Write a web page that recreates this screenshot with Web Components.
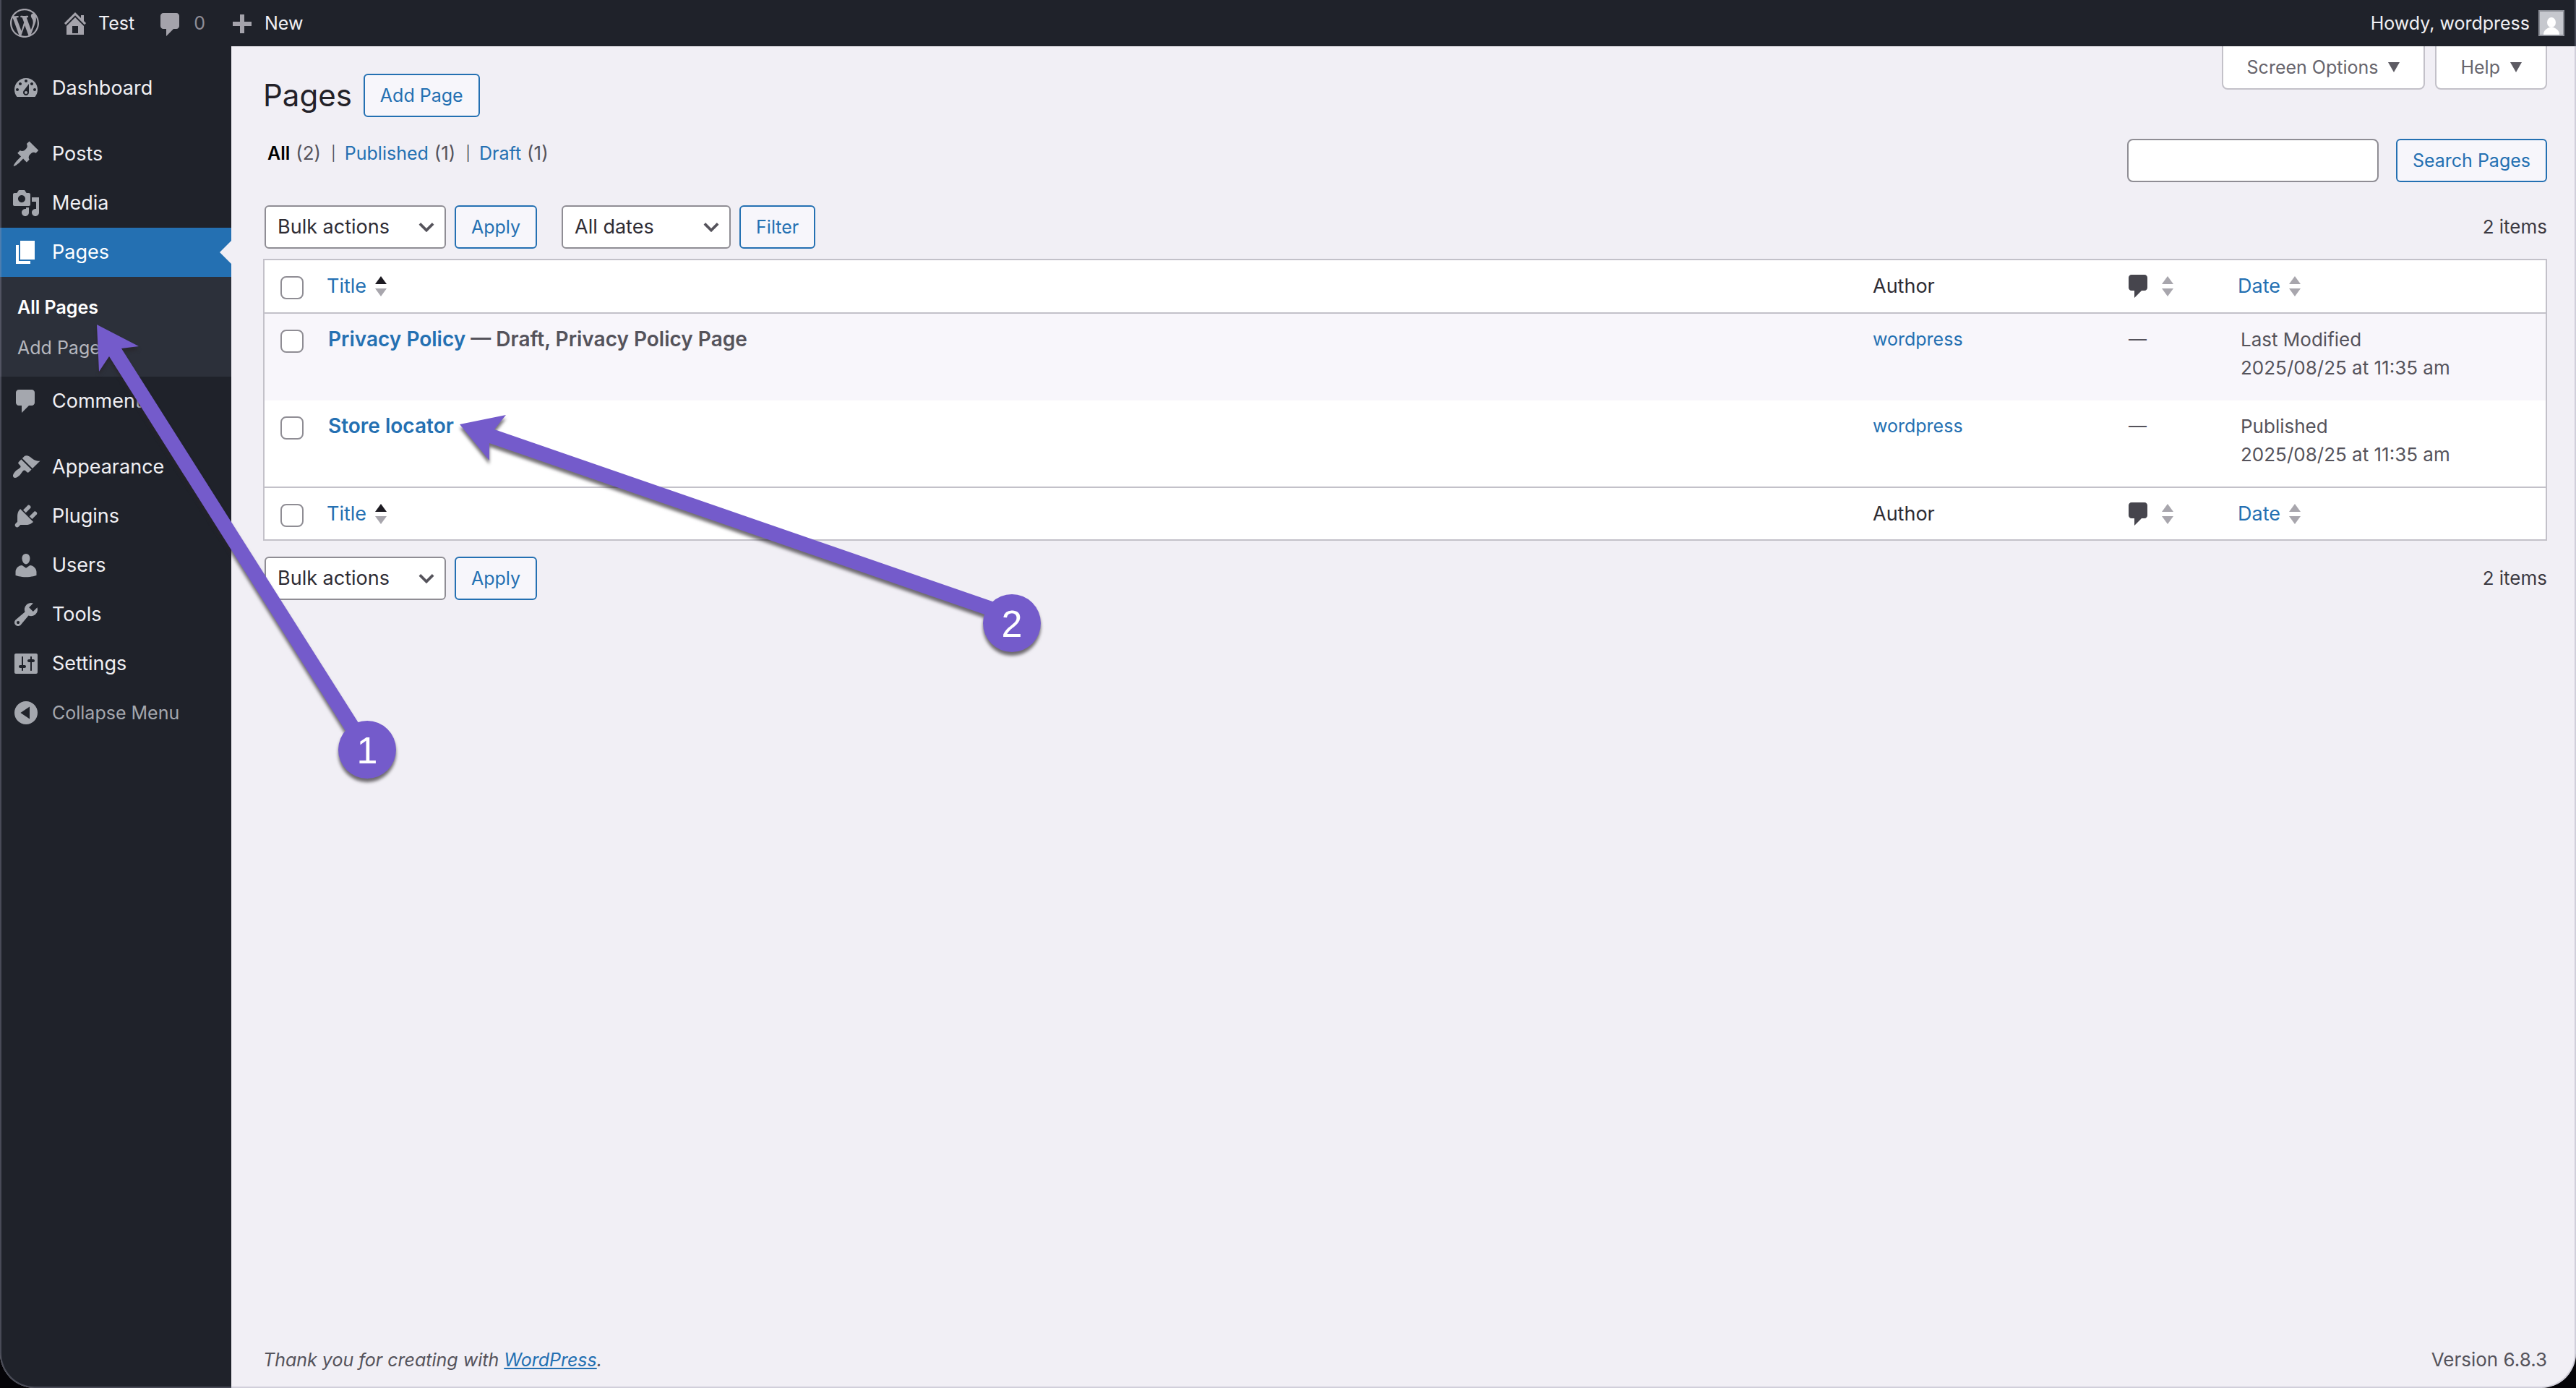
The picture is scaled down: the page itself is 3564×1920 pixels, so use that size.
<!DOCTYPE html>
<html lang="en">
<head>
<meta charset="utf-8">
<title>Pages ‹ Test — WordPress</title>
<style>
	html {
		background: #050408;
	}
	body {
		margin: 0;
		font-family: Inter, "Liberation Sans", sans-serif;
		font-size: 25px;
		line-height: 40px;
		color: #3c3a42;
		--accent: #2470b2;
		--bar: #1f222a;
		--sub: #2c303a;
		--page: #f1eff5;
		--line: #c3c1c9;
		--field: #8f8d94;
		--muted: #55535b;
		--mark: #745bcb;
	}
</style>
</head>
<body>
<wp-screen>
	<admin-bar slot="bar" site="Test" comments="0" user="wordpress"></admin-bar>
	<admin-menu slot="menu">
		<menu-item icon="dashboard">Dashboard</menu-item>
		<menu-item icon="post" gap>Posts</menu-item>
		<menu-item icon="media">Media</menu-item>
		<menu-item icon="page" current>Pages</menu-item>
		<sub-menu>
			<sub-item current>All Pages</sub-item>
			<sub-item>Add Page</sub-item>
		</sub-menu>
		<menu-item icon="comments">Comments</menu-item>
		<menu-item icon="appearance" gap>Appearance</menu-item>
		<menu-item icon="plugins">Plugins</menu-item>
		<menu-item icon="users">Users</menu-item>
		<menu-item icon="tools">Tools</menu-item>
		<menu-item icon="settings">Settings</menu-item>
		<menu-item icon="collapse" muted>Collapse Menu</menu-item>
	</admin-menu>
	<screen-header>Pages</screen-header>
	<view-filters></view-filters>
	<table-nav dates items="2 items"></table-nav>
	<pages-table></pages-table>
	<table-nav items="2 items"></table-nav>
	<screen-footer version="Version 6.8.3"></screen-footer>
	<step-arrows slot="overlay"></step-arrows>
</wp-screen>

<script>
const ICONS = {
	wordpress: "M20 10c0-5.51-4.49-10-10-10C4.48 0 0 4.49 0 10c0 5.52 4.48 10 10 10 5.51 0 10-4.48 10-10zM7.78 15.37L4.37 6.22c.55-.02 1.17-.08 1.17-.08.5-.06.44-1.13-.06-1.11 0 0-1.45.11-2.37.11-.18 0-.37 0-.58-.01C4.12 2.69 6.87 1.11 10 1.11c2.33 0 4.45.87 6.05 2.34-.68-.11-1.65.39-1.65 1.58 0 .74.45 1.36.9 2.1.35.61.55 1.36.55 2.46 0 1.49-1.4 5-1.4 5l-3.03-8.37c.54-.02.82-.17.82-.17.5-.05.44-1.25-.06-1.22 0 0-1.44.12-2.38.12-.87 0-2.33-.12-2.33-.12-.5-.03-.56 1.2-.06 1.22l.92.08 1.26 3.41zM17.41 10c.24-.64.74-1.87.43-4.25.7 1.29 1.05 2.71 1.05 4.25 0 3.29-1.73 6.24-4.4 7.78.97-2.59 1.94-5.2 2.92-7.78zM6.1 18.09C3.12 16.65 1.11 13.53 1.11 10c0-1.3.23-2.48.72-3.59C3.25 10.3 4.67 14.2 6.1 18.09zm4.03-6.63l2.58 6.98c-.86.29-1.76.45-2.71.45-.79 0-1.57-.11-2.29-.33.81-2.38 1.62-4.74 2.42-7.1z",
	home: "M16 8.5l1.53 1.53-1.06 1.06L10 4.6l-6.47 6.49-1.06-1.06L10 2.5l4 4v-2h2v4zm-6-2.46l6 5.99V18H4v-5.97zM12 17v-5H8v5h4z",
	plus: "M17 7v3h-5v5H9v-5H4V7h5V2h3v5h5z",
	comments: "M5 2h9c1.1 0 2 .9 2 2v7c0 1.1-.9 2-2 2h-2l-5 5v-5H5c-1.1 0-2-.9-2-2V4c0-1.1.9-2 2-2z",
	dashboard: "M3.76 16h12.48c1.1-1.37 1.76-3.11 1.76-5 0-4.42-3.58-8-8-8s-8 3.58-8 8c0 1.89.66 3.63 1.76 5zM10 4c.55 0 1 .45 1 1s-.45 1-1 1-1-.45-1-1 .45-1 1-1zM6 6c.55 0 1 .45 1 1s-.45 1-1 1-1-.45-1-1 .45-1 1-1zm8 0c.55 0 1 .45 1 1s-.45 1-1 1-1-.45-1-1 .45-1 1-1zm-5.37 5.55L12 7v6c0 1.1-.9 2-2 2s-2-.9-2-2c0-.57.24-1.08.63-1.45zM4 10c.55 0 1 .45 1 1s-.45 1-1 1-1-.45-1-1 .45-1 1-1zm12 0c.55 0 1 .45 1 1s-.45 1-1 1-1-.45-1-1 .45-1 1-1zm-5 3c0-.55-.45-1-1-1s-1 .45-1 1 .45 1 1 1 1-.45 1-1z",
	post: "M10.44 3.02l1.82-1.82 6.36 6.35-1.83 1.82c-1.05-.68-2.48-.57-3.41.36l-.75.75c-.92.93-1.04 2.35-.35 3.41l-1.83 1.82-2.41-2.41-2.8 2.79c-.42.42-3.38 2.71-3.8 2.29s1.86-3.39 2.28-3.81l2.79-2.79L4.1 9.36l1.83-1.82c1.05.69 2.48.57 3.4-.36l.75-.75c.93-.92 1.05-2.35.36-3.41z",
	media: "M13 11V4c0-.55-.45-1-1-1h-1.67L9 1H5L3.67 3H2c-.55 0-1 .45-1 1v7c0 .55.45 1 1 1h10c.55 0 1-.45 1-1zM7 4.5c1.38 0 2.5 1.12 2.5 2.5S8.38 9.5 7 9.5 4.5 8.38 4.5 7 5.62 4.5 7 4.5zM14 6h5v10.5c0 1.38-1.12 2.5-2.5 2.5S14 17.88 14 16.5s1.12-2.5 2.5-2.5c.17 0 .34.02.5.05V9h-3V6zm-4 8.05V13h2v3.5c0 1.38-1.12 2.5-2.5 2.5S7 17.88 7 16.5 8.12 14 9.5 14c.17 0 .34.02.5.05z",
	page: "M6 15V2h10v13H6zm-1 1h8v2H3V5h2v11z",
	appearance: "M14.48 11.06L7.41 3.99l1.5-1.5c.5-.56 2.3-.47 3.51.32 1.21.8 1.43 1.28 2.91 2.1 1.18.64 2.45 1.26 4.45.85zm-.71.71L6.7 4.7 4.93 6.47c-.39.39-.39 1.02 0 1.41l1.06 1.06c.39.39.39 1.03 0 1.42-.6.6-1.43 1.11-2.21 1.69-.35.26-.7.53-1.01.84C1.43 14.23.4 16.08 1.4 17.07c.99 1 2.84-.03 4.18-1.36.31-.31.58-.66.85-1.02.57-.78 1.08-1.61 1.69-2.21.39-.39 1.02-.39 1.41 0l1.06 1.06c.39.39 1.02.39 1.41 0z",
	plugins: "M13.11 4.36L9.87 7.6 8 5.73l3.24-3.24c.35-.34 1.05-.2 1.56.32.52.51.66 1.21.31 1.55zm-8 1.77l.91-1.12 9.01 9.01-1.19.84c-.71.71-2.63 1.16-3.82 1.16H6.14L4.9 17.26c-.59.59-1.54.59-2.12 0-.59-.58-.59-1.53 0-2.12l1.24-1.24v-3.88c0-1.13.4-3.19 1.09-3.89zm7.26 3.97l3.24-3.24c.34-.35 1.04-.21 1.55.31.52.51.66 1.21.31 1.55l-3.24 3.25z",
	users: "M10 9.25c-2.27 0-2.73-3.44-2.73-3.44C7 4.02 7.82 2 9.97 2c2.16 0 2.98 2.02 2.71 3.81 0 0-.41 3.44-2.68 3.44zm0 2.57L12.72 10c2.39 0 4.52 2.33 4.52 4.53v2.49s-3.65 1.13-7.24 1.13c-3.65 0-7.24-1.13-7.24-1.13v-2.49c0-2.25 1.94-4.48 4.47-4.48z",
	tools: "M16.68 9.77c-1.34 1.34-3.3 1.67-4.95.99l-5.41 6.52c-.99.99-2.59.99-3.58 0s-.99-2.59 0-3.57l6.52-5.42c-.68-1.65-.35-3.61.99-4.95 1.28-1.28 3.12-1.62 4.72-1.06l-2.89 2.89 2.82 2.82 2.86-2.87c.53 1.58.18 3.39-1.08 4.65zM3.81 16.21c.4.39 1.04.39 1.43 0 .4-.4.4-1.04 0-1.43-.39-.4-1.03-.4-1.43 0-.39.39-.39 1.03 0 1.43z",
	settings: "M18 16V4c0-.55-.45-1-1-1H3c-.55 0-1 .45-1 1v12c0 .55.45 1 1 1h14c.55 0 1-.45 1-1zM8 11h1c.55 0 1 .45 1 1s-.45 1-1 1H8v1.5c0 .28-.22.5-.5.5s-.5-.22-.5-.5V13H6c-.55 0-1-.45-1-1s.45-1 1-1h1V5.5c0-.28.22-.5.5-.5s.5.22.5.5V11zm5-2h-1c-.55 0-1-.45-1-1s.45-1 1-1h1V5.5c0-.28.22-.5.5-.5s.5.22.5.5V7h1c.55 0 1 .45 1 1s-.45 1-1 1h-1v5.5c0 .28-.22.5-.5.5s-.5-.22-.5-.5V9z",
	collapse: "M10 2a8 8 0 1 0 0 16 8 8 0 0 0 0-16zM12.5 5.8v8.4L6.2 10z",
};

function icon(name) {
	return `<svg class="icon" viewBox="0 0 20 20" aria-hidden="true"><path fill="currentColor" fill-rule="evenodd" d="${ICONS[name]}"></path></svg>`;
}

// Rules shared by every element that draws form controls.
const CONTROLS = `
	button, select, input {
		box-sizing: border-box;
		font: inherit;
		margin: 0;
	}
	button.action {
		height: 60px;
		padding: 0 21px;
		border: 2px solid var(--accent);
		border-radius: 6px;
		background: #f7f6fb;
		color: var(--accent);
		cursor: pointer;
		white-space: nowrap;
	}
	a {
		color: var(--accent);
		text-decoration: none;
	}
`;

class WpScreenElement extends HTMLElement {
	connectedCallback() {
		this.attachShadow({mode: "open"}).innerHTML = `
			<style>
				:host {
					display: flex;
					flex-direction: column;
					position: relative;
					min-height: 100vh;
					background: var(--page);
					border-radius: 0 0 48px 48px;
					overflow: hidden;
				}
				:host::after {
					content: "";
					position: absolute;
					inset: 0;
					border: 2px solid rgba(150, 150, 170, 0.35);
					border-top: 0;
					border-radius: 0 0 48px 48px;
					pointer-events: none;
				}
				#body {
					display: flex;
					flex: 1;
				}
				main {
					display: flex;
					flex-direction: column;
					flex: 1;
					min-width: 0;
					padding: 0 40px 0 44px;
				}
			</style>
			<slot name="bar"></slot>
			<div id="body">
				<slot name="menu"></slot>
				<main><slot></slot></main>
			</div>
			<slot name="overlay"></slot>
		`;
	}
}
customElements.define("wp-screen", WpScreenElement);

class AdminBarElement extends HTMLElement {
	connectedCallback() {
		this.attachShadow({mode: "open"}).innerHTML = `
			<style>
				:host {
					display: flex;
					justify-content: space-between;
					height: 64px;
					padding: 0 16px 0 14px;
					background: var(--bar);
				}
				nav {
					display: flex;
					gap: 30px;
				}
				a {
					display: flex;
					align-items: center;
					gap: 12px;
					color: #f0f0f4;
					text-decoration: none;
				}
				.icon {
					width: 40px;
					height: 40px;
					color: #a4a3ab;
				}
				.count {
					color: #8f8e97;
				}
				#new .icon {
					padding-top: 8px;
				}
				#comments .icon {
					padding-top: 4px;
				}
				#avatar {
					box-sizing: border-box;
					width: 36px;
					height: 36px;
					border: 2px solid #8c8f97;
					background: #c6c8ce;
				}
			</style>
			<nav aria-label="Toolbar">
				<a href="#" aria-label="About WordPress">${icon("wordpress")}</a>
				<a href="#">${icon("home")}${this.getAttribute("site")}</a>
				<a href="#" id="comments">${icon("comments")}<span class="count">${this.getAttribute("comments")}</span></a>
				<a href="#" id="new">${icon("plus")}New</a>
			</nav>
			<a href="#">Howdy, ${this.getAttribute("user")}
				<svg id="avatar" viewBox="0 0 32 32" aria-hidden="true">
					<ellipse cx="16" cy="15" rx="6" ry="7" fill="#fff"></ellipse>
					<path fill="#fff" d="M5 32c0-6 4-8 8-10h6c4 2 8 4 8 10z"></path>
				</svg>
			</a>
		`;
	}
}
customElements.define("admin-bar", AdminBarElement);

class AdminMenuElement extends HTMLElement {
	connectedCallback() {
		this.attachShadow({mode: "open"}).innerHTML = `
			<style>
				:host {
					display: block;
					flex: none;
					width: 320px;
					background: var(--bar);
				}
				nav {
					display: flex;
					flex-direction: column;
					padding-top: 24px;
				}
			</style>
			<nav aria-label="Main menu"><slot></slot></nav>
		`;
	}
}
customElements.define("admin-menu", AdminMenuElement);

class MenuItemElement extends HTMLElement {
	connectedCallback() {
		this.attachShadow({mode: "open"}).innerHTML = `
			<style>
				:host {
					display: block;
				}
				:host([gap]) {
					margin-top: 23px;
				}
				a {
					display: flex;
					align-items: center;
					gap: 16px;
					position: relative;
					height: 68px;
					padding-left: 16px;
					color: #f0f0f4;
					font-size: 27px;
					text-decoration: none;
				}
				.icon {
					width: 40px;
					height: 40px;
					color: #a4a7ae;
				}
				:host([current]) a {
					background: var(--accent);
					color: #fff;
				}
				:host([current]) .icon {
					color: #fff;
				}
				:host([current]) a::after {
					content: "";
					position: absolute;
					right: 0;
					top: 18px;
					border: 16px solid transparent;
					border-left: 0;
					border-right-color: var(--page);
				}
				:host([muted]) a {
					color: #a4a7ae;
					font-size: 25px;
				}
			</style>
			<a href="#">${icon(this.getAttribute("icon"))}<slot></slot></a>
		`;
	}
}
customElements.define("menu-item", MenuItemElement);

class SubMenuElement extends HTMLElement {
	connectedCallback() {
		this.attachShadow({mode: "open"}).innerHTML = `
			<style>
				:host {
					display: block;
					padding: 14px 0 12px;
					background: var(--sub);
				}
			</style>
			<slot></slot>
		`;
	}
}
customElements.define("sub-menu", SubMenuElement);

class SubItemElement extends HTMLElement {
	connectedCallback() {
		this.attachShadow({mode: "open"}).innerHTML = `
			<style>
				:host {
					display: block;
				}
				a {
					display: block;
					padding: 8px 24px;
					color: #b5b7be;
					text-decoration: none;
				}
				:host([current]) a {
					color: #fff;
					font-weight: 600;
				}
			</style>
			<a href="#"><slot></slot></a>
		`;
	}
}
customElements.define("sub-item", SubItemElement);

class ScreenHeaderElement extends HTMLElement {
	connectedCallback() {
		this.attachShadow({mode: "open"}).innerHTML = `
			<style>
				${CONTROLS}
				:host {
					display: flex;
					justify-content: space-between;
					align-items: flex-start;
				}
				#title, #tabs {
					display: flex;
				}
				#title {
					align-items: center;
					gap: 16px;
					padding-top: 38px;
				}
				h1 {
					margin: 0;
					font-size: 42px;
					font-weight: 400;
					line-height: 60px;
					color: #232128;
				}
				#tabs {
					gap: 14px;
				}
				#tabs button {
					display: flex;
					align-items: center;
					gap: 14px;
					height: 60px;
					padding: 0 33px;
					border: 2px solid var(--line);
					border-top: 0;
					border-radius: 0 0 8px 8px;
					background: #fff;
					color: #67656d;
				}
				#tabs svg {
					width: 16px;
					height: 14px;
				}
			</style>
			<div id="title">
				<h1><slot></slot></h1>
				<button class="action">Add Page</button>
			</div>
			<div id="tabs">
				<button>Screen Options <svg viewBox="0 0 16 14" aria-hidden="true"><path d="M0 0h16L8 14z" fill="#5d5b63"></path></svg></button>
				<button>Help <svg viewBox="0 0 16 14" aria-hidden="true"><path d="M0 0h16L8 14z" fill="#5d5b63"></path></svg></button>
			</div>
		`;
	}
}
customElements.define("screen-header", ScreenHeaderElement);

class ViewFiltersElement extends HTMLElement {
	connectedCallback() {
		this.attachShadow({mode: "open"}).innerHTML = `
			<style>
				${CONTROLS}
				:host {
					display: flex;
					justify-content: space-between;
					align-items: flex-start;
					margin-top: 30px;
				}
				ul {
					display: flex;
					gap: 14px;
					margin: 0;
					padding: 0 0 0 6px;
					list-style: none;
					color: var(--muted);
				}
				li {
					display: flex;
					gap: 8px;
				}
				li + li::before {
					content: "|";
					margin-right: 4px;
					font-size: 20px;
				}
				span {
					font-size: 26px;
				}
				[aria-current] {
					color: #000;
					font-weight: 600;
				}
				form {
					display: flex;
					gap: 24px;
				}
				input {
					width: 348px;
					height: 60px;
					padding: 0 16px;
					border: 2px solid var(--field);
					border-radius: 8px;
					background: #fff;
				}
			</style>
			<ul>
				<li><a href="#" aria-current="page">All</a> <span>(2)</span></li>
				<li><a href="#">Published</a> <span>(1)</span></li>
				<li><a href="#">Draft</a> <span>(1)</span></li>
			</ul>
			<form>
				<input type="search" aria-label="Search Pages">
				<button class="action" type="button">Search Pages</button>
			</form>
		`;
	}
}
customElements.define("view-filters", ViewFiltersElement);

class TableNavElement extends HTMLElement {
	connectedCallback() {
		let dates = this.hasAttribute("dates") ? `
			<div class="group">
				<div class="pick">
					<select id="dates" aria-label="Filter by date"><option>All dates</option></select>
					<svg viewBox="0 0 24 14" aria-hidden="true"><path d="M2 2l10 10L22 2"></path></svg>
				</div>
				<button class="action">Filter</button>
			</div>
		` : "";
		this.attachShadow({mode: "open"}).innerHTML = `
			<style>
				${CONTROLS}
				:host {
					display: flex;
					gap: 34px;
					margin: 22px 0 0 2px;
				}
				:host([dates]) {
					margin: 32px 0 14px 2px;
				}
				.group {
					display: flex;
					gap: 12px;
				}
				.pick {
					display: grid;
					align-items: center;
					width: 251px;
				}
				.pick > * {
					grid-area: 1 / 1;
				}
				.group + .group .pick {
					width: 234px;
				}
				select {
					appearance: none;
					height: 60px;
					padding: 0 48px 0 16px;
					border: 2px solid var(--field);
					border-radius: 6px;
					background: #fff;
					color: #2e2c34;
					font-size: 27px;
				}
				svg {
					justify-self: end;
					width: 22px;
					height: 14px;
					margin-right: 16px;
					fill: none;
					stroke: #55535b;
					stroke-width: 4;
					pointer-events: none;
				}
				#count {
					margin-left: auto;
					font-size: 26px;
					line-height: 60px;
				}
			</style>
			<div class="group">
				<div class="pick">
					<select id="bulk" aria-label="Select bulk action"><option>Bulk actions</option></select>
					<svg viewBox="0 0 24 14" aria-hidden="true"><path d="M2 2l10 10L22 2"></path></svg>
				</div>
				<button class="action">Apply</button>
			</div>
			${dates}
			<span id="count">${this.getAttribute("items")}</span>
		`;
	}
}
customElements.define("table-nav", TableNavElement);

class PagesTableElement extends HTMLElement {
	connectedCallback() {
		let rows = [
			{title: "Privacy Policy", state: " — Draft, Privacy Policy Page", status: "Last Modified"},
			{title: "Store locator", state: "", status: "Published"},
		];
		let sort = active => `
			<svg class="sort" viewBox="0 0 16 28" aria-hidden="true">
				<path d="M8 0l8 11H0z" fill="${active ? "#1d1b22" : "#a8a6ad"}"></path>
				<path d="M0 17h16L8 28z" fill="#a8a6ad"></path>
			</svg>
		`;
		let head = where => `
			<tr>
				<td class="check"><input type="checkbox" aria-label="Select all (${where})"></td>
				<th scope="col"><a href="#">Title ${sort(true)}</a></th>
				<th scope="col">Author</th>
				<th scope="col"><a href="#" aria-label="Comments">${icon("comments")}${sort(false)}</a></th>
				<th scope="col"><a href="#">Date ${sort(false)}</a></th>
			</tr>
		`;
		let body = "";
		for (let r of rows) {
			body += `
				<tr>
					<td class="check"><input type="checkbox" aria-label="Select ${r.title}"></td>
					<td class="title"><a href="#">${r.title}</a>${r.state}</td>
					<td><a href="#">wordpress</a></td>
					<td>—</td>
					<td class="when">${r.status}<br>2025/08/25 at 11:35 am</td>
				</tr>
			`;
		}
		this.attachShadow({mode: "open"}).innerHTML = `
			<style>
				${CONTROLS}
				:host {
					display: block;
					border: 2px solid var(--line);
					background: #fff;
				}
				table {
					width: 100%;
					table-layout: fixed;
					border-collapse: collapse;
				}
				.c-check { width: 66px; }
				.c-author { width: 354px; }
				.c-comments { width: 151px; }
				.c-date { width: 446px; }
				th, td {
					padding: 0 20px;
					text-align: left;
					vertical-align: top;
					font-weight: 400;
				}
				th {
					vertical-align: middle;
					color: #2e2c34;
					font-size: 27px;
				}
				thead tr {
					height: 73px;
					border-bottom: 2px solid var(--line);
				}
				tfoot tr {
					height: 72px;
					border-top: 2px solid var(--line);
				}
				tbody tr {
					height: 120px;
				}
				tbody tr:first-child {
					height: 121px;
				}
				tbody tr:nth-child(odd) {
					background: #f8f6fb;
				}
				tbody td {
					padding-top: 16px;
					line-height: 39px;
					color: var(--muted);
				}
				td.title {
					padding-left: 22px;
					font-size: 28px;
					font-weight: 600;
				}
				td.when {
					padding-left: 24px;
					font-size: 26px;
				}
				td.check {
					padding: 22px 0 0 22px;
				}
				input {
					display: block;
					appearance: none;
					width: 32px;
					height: 32px;
					border: 2px solid var(--field);
					border-radius: 8px;
					background: #fff;
				}
				th a {
					display: flex;
					align-items: center;
					gap: 12px;
				}
				.icon {
					width: 40px;
					height: 40px;
					margin-left: -6px;
					color: #46454d;
				}
				.sort {
					width: 16px;
					height: 28px;
				}
			</style>
			<table>
				<colgroup><col class="c-check"><col><col class="c-author"><col class="c-comments"><col class="c-date"></colgroup>
				<thead>${head("top")}</thead>
				<tbody>${body}</tbody>
				<tfoot>${head("bottom")}</tfoot>
			</table>
		`;
	}
}
customElements.define("pages-table", PagesTableElement);

class ScreenFooterElement extends HTMLElement {
	connectedCallback() {
		this.attachShadow({mode: "open"}).innerHTML = `
			<style>
				:host {
					display: flex;
					justify-content: space-between;
					margin-top: auto;
					padding-bottom: 19px;
					color: var(--muted);
				}
				a {
					color: var(--accent);
				}
				span {
					font-size: 26px;
				}
			</style>
			<em>Thank you for creating with <a href="#">WordPress</a>.</em>
			<span>${this.getAttribute("version")}</span>
		`;
	}
}
customElements.define("screen-footer", ScreenFooterElement);

// Numbered arrows laid over the screen.
class StepArrowsElement extends HTMLElement {
	connectedCallback() {
		this.attachShadow({mode: "open"}).innerHTML = `
			<style>
				:host {
					position: absolute;
					inset: 0;
					pointer-events: none;
				}
				svg {
					width: 100%;
					height: 100%;
				}
				g {
					fill: var(--mark);
					filter: drop-shadow(0 5px 2px rgba(40, 36, 40, 0.65));
				}
				text {
					fill: #fff;
					font: 52px "Liberation Sans", sans-serif;
					text-anchor: middle;
				}
			</style>
			<svg>
				<g>
					<path d="M134 449L192 479L168 482L496 1000L478 1011L151 493L137 514Z"></path>
					<circle cx="508" cy="1037" r="40"></circle>
				</g>
				<g>
					<path d="M636 587L700 574L684 594L1376 833L1368 852L677 613L677 637Z"></path>
					<circle cx="1400" cy="862" r="40"></circle>
				</g>
				<text x="508" y="1056">1</text>
				<text x="1400" y="881">2</text>
			</svg>
		`;
	}
}
customElements.define("step-arrows", StepArrowsElement);
</script>
</body>
</html>
